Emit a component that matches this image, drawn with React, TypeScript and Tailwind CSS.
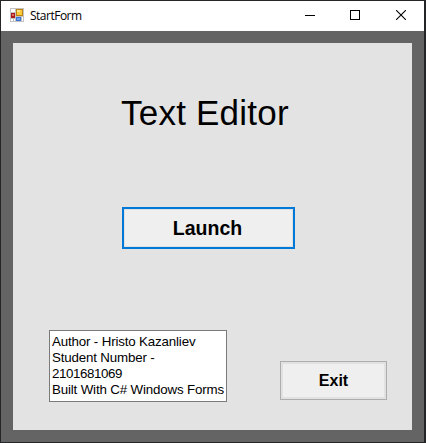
function AppIcon() {
  return (
    <svg className="-mt-[2px]" width="14" height="14" viewBox="0 0 14 14" shapeRendering="crispEdges">
      <rect width="14" height="14" fill="#c3c3c3" />
      <rect x="1" y="1" width="4" height="3" fill="#fff" />
      <rect x="1" y="11" width="2" height="2" fill="#fff" />
      <rect x="4" y="11" width="1" height="2" fill="#fff" />
      <rect x="12" y="9" width="1" height="4" fill="#fff" />
      <rect x="1" y="5" width="4" height="5" fill="#a81c1c" />
      <rect x="2" y="6" width="2" height="2" fill="#dc6a5e" />
      <rect x="6" y="1" width="7" height="7" fill="#bd8410" />
      <rect x="7" y="2" width="5" height="5" fill="#fbc93c" />
      <rect x="7" y="2" width="3" height="2" fill="#ffe38c" />
      <rect x="6" y="9" width="5" height="4" fill="#3c72d0" />
      <rect x="7" y="10" width="3" height="2" fill="#74a5f2" />
    </svg>
  );
}

function TitleBar() {
  return (
    <header className="flex h-[30px] shrink-0 items-center bg-white pl-[9px]">
      <AppIcon />
      <span className="ml-[6px] font-['Open_Sans',sans-serif] text-[12px] leading-4 tracking-[-0.5px]">
        StartForm
      </span>
      <div className="ml-auto flex h-full pb-[2px]">
        <button aria-label="Minimize" className="flex h-full w-[45px] items-center justify-center">
          <svg width="10" height="10" shapeRendering="crispEdges"><path d="M0 5.5H10" stroke="#000" /></svg>
        </button>
        <button aria-label="Maximize" className="flex h-full w-[45px] items-center justify-center">
          <svg width="10" height="10" shapeRendering="crispEdges"><path d="M.5.5h9v9h-9z" fill="none" stroke="#000" /></svg>
        </button>
        <button aria-label="Close" className="flex h-full w-[47px] items-center justify-center pl-px">
          <svg width="10" height="10"><path d="M0 0 10 10M10 0 0 10" stroke="#000" strokeWidth="1.1" /></svg>
        </button>
      </div>
    </header>
  );
}

export default function App() {
  return (
    <div className="h-[443px] w-[426px] bg-[#242526] py-px pr-[2px] pl-px font-['Liberation_Sans',Arial,sans-serif] text-black">
      <div className="flex h-full flex-col bg-[#646464]">
        <TitleBar />
        <main className="mx-3 mt-3 mb-3 flex flex-1 flex-col bg-[#e3e3e3]">
          <h1 className="mt-[50px] ml-[108px] text-[35px] leading-10 tracking-[0.22px] whitespace-nowrap">Text Editor</h1>
          <button className="mt-[74px] ml-[109px] h-[42px] w-[173px] border-2 border-[#0078d7] bg-[#e1e1e1] p-px text-[19.5px] leading-6 font-bold">
            <span className="flex h-full items-center justify-center bg-[#efefef] pr-[2px]">Launch</span>
          </button>
          <div className="mt-[81px] flex items-start pl-9">
            <div className="h-[72px] w-[178px] border border-[#7a7a7a] bg-white pt-[3px] pl-[2px] text-[13.33px] leading-4 tracking-[-0.16px] whitespace-nowrap">
              <p>Author - Hristo Kazanliev</p>
              <p>Student Number -</p>
              <p className="tracking-[-0.4px]">2101681069</p>
              <p>Built With C# Windows Forms</p>
            </div>
            <button className="mt-[31px] ml-[53px] h-[39px] w-[107px] border border-[#adadad] bg-[#e1e1e1] p-[2px] text-[16px] leading-5 font-bold">
              <span className="flex h-full items-center justify-center bg-[#efefef]">Exit</span>
            </button>
          </div>
        </main>
      </div>
    </div>
  );
}
